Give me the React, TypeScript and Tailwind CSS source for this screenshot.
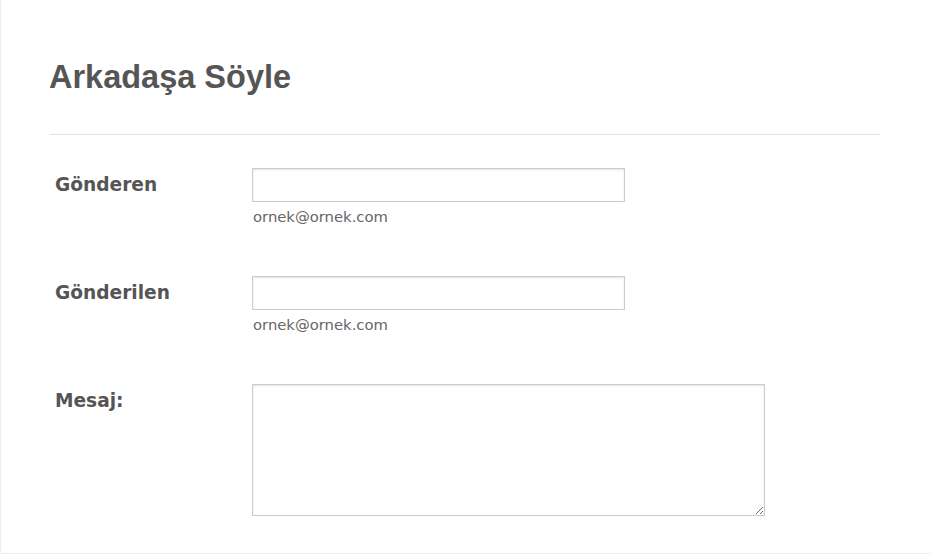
import React from "react";

const labelCls =
  "w-[202px] shrink-0 pl-[5px] mt-[6px] text-[18.6px] leading-[21px] font-bold text-[#555] [font-family:'DejaVu_Sans',sans-serif]";
const hintCls =
  "mt-[6px] pl-px text-[14.8px] leading-[17px] text-[#666] [font-family:'DejaVu_Sans',sans-serif]";
const inputCls =
  "block w-[373px] h-[34px] bg-white border border-[#cccccc] shadow-[inset_0_1px_2px_rgba(0,0,0,0.12)] outline-none px-2 text-[14px]";

export default function App() {
  return (
    <div className="w-[930px] h-[554px] bg-white border-l border-b border-[#eeeeee] overflow-hidden">
      <div className="pl-[49px] pr-[50px]">
        <h1 className="pt-[59px] -ml-[1px] text-[32.5px] leading-[36px] font-bold text-[#555] [font-family:'Liberation_Sans',Arial,sans-serif]">
          Arkadaşa Söyle
        </h1>
        <div className="mt-[39px] h-px bg-[#e3e3e3]" />
        <div className="mt-[33px] flex flex-col gap-[51px]">
          <div className="flex">
            <div className={labelCls}>Gönderen</div>
            <div>
              <input className={inputCls} type="text" />
              <div className={hintCls}>ornek@ornek.com</div>
            </div>
          </div>
          <div className="flex">
            <div className={labelCls}>Gönderilen</div>
            <div>
              <input className={inputCls} type="text" />
              <div className={hintCls}>ornek@ornek.com</div>
            </div>
          </div>
          <div className="flex">
            <div className={labelCls}>Mesaj:</div>
            <div>
              <textarea className="block w-[513px] h-[132px] bg-white border border-[#cccccc] shadow-[inset_0_1px_2px_rgba(0,0,0,0.12)] outline-none p-2 text-[14px] resize" />
            </div>
          </div>
        </div>
      </div>
    </div>
  );
}
